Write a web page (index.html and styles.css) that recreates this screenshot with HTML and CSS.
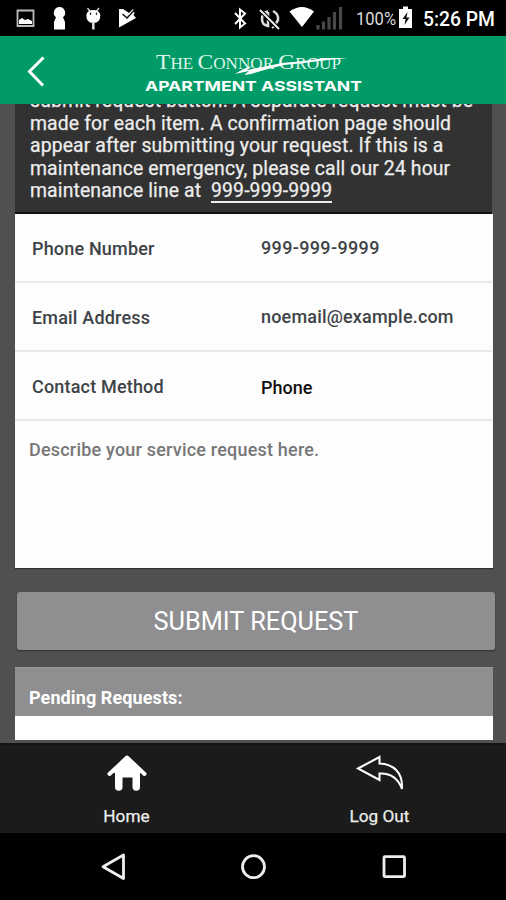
FILE: index.html
```html
<!DOCTYPE html>
<html lang="en">
<head>
<meta charset="utf-8">
<title>Apartment Assistant</title>
<link rel="stylesheet" href="styles.css">
</head>
<body>
<div class="app">
  <div class="status">
    <svg class="status-icons" width="506" height="36" viewBox="0 0 506 36">
      <path d="M17.5 10.5h16v15.500h-16z" fill="none" stroke="#bbb" stroke-width="1.8"/>
      <path d="M19 24v-4l3-2 3 2 3-1 4 2v3z" fill="#fff"/>
      <path d="M59.500 7a5.800 5.800 0 0 1 3.500 10.300l2 4.700v7.500H54V22l2-4.700A5.800 5.800 0 0 1 59.500 7z" fill="#fff"/>
      <path d="M87.500 8l3 4M99 8l-3 4" stroke="#ddd" stroke-width="1.3"/>
      <path d="M86.300 15q1-5 7-5t7 5q0 8-7 8t-7-8z" fill="#fff"/>
      <path d="M93.300 22v7.500" stroke="#ddd" stroke-width="2.500"/>
      <path d="M90.500 12.500v2.500M96.500 12.500v2.500" stroke="#333" stroke-width="1.300"/>
      <path d="M119 9h4l6 4 4-4 1.500 4-1 2 2.500 3L119 27.500z" fill="#fff"/>
      <path d="M122.500 14l4.500 4 7.500-8" fill="none" stroke="#111" stroke-width="1.500"/>
      <path d="M235 13l10 10.500-5 4V9.500l5 4L235 24" fill="none" stroke="#fff" stroke-width="2"/>
      <path d="M268 12v14q-6-1-6-7t6-7M273 11q6 3 5 9l-3 5" fill="none" stroke="#ddd" stroke-width="2.500"/>
      <path d="M268 11l-3 1 2 4M272 28l3-2-2-4" fill="none" stroke="#ddd" stroke-width="1.800"/>
      <path d="M260 10l19 19" stroke="#000" stroke-width="4"/>
      <path d="M260 10l19 19" stroke="#eee" stroke-width="2"/>
      <path d="M289.500 11.500q12.500-9 24.500 0L302 27z" fill="#fff"/>
      <path d="M318 25v4.500M323.500 21.500v8M329 17v12.500M334.500 12v17.500M340.500 7v22.500" stroke="#484848" stroke-width="3.200"/>
      <path d="M399 9h4V6.500h5V9h4v19h-13z" fill="#fff"/>
      <path d="M407.500 12l-5 7h3l-1 6 5-7.500h-3z" fill="#111"/>
      <text class="battery" x="356" y="25" textLength="40" lengthAdjust="spacingAndGlyphs">100%</text>
      <text class="clock" x="423" y="26" textLength="72" lengthAdjust="spacingAndGlyphs">5:26 PM</text>
    </svg>
  </div>
  <header class="header">
    <svg width="506" height="68" viewBox="0 0 506 68">
      <path d="M43.500 21.500L29.500 35.500l13.500 14" fill="none" stroke="#fff" stroke-width="3"/>
      <text class="brand" x="156" y="33" textLength="185" lengthAdjust="spacingAndGlyphs"><tspan class="cap">T</tspan>HE <tspan class="cap">C</tspan>ONNOR <tspan class="cap">G</tspan>ROUP</text>
      <path d="M235 38q9-6 17-8l-5 4 15-3 20-4 22-2 20-3 24 0-20 2-24 3-20 2-16 4-17 5-7 1 5-4z" fill="#fff"/>
      <text class="product" x="145" y="55" textLength="217" lengthAdjust="spacingAndGlyphs">APARTMENT ASSISTANT</text>
    </svg>
  </header>
  <main class="content">
    <section class="intro">
      <p class="l1">submit request button. A separate request must be</p>
      <p>made for each item. A confirmation page should</p>
      <p>appear after submitting your request. If this is a</p>
      <p>maintenance emergency, please call our 24 hour</p>
      <p>maintenance line at &nbsp;<span class="tel">999-999-9999</span></p>
    </section>
    <section class="form">
      <div class="row"><span class="label">Phone Number</span><span class="value raised">999-999-9999</span></div>
      <div class="row"><span class="label">Email Address</span><span class="value raised email">noemail@example.com</span></div>
      <div class="row"><span class="label">Contact Method</span><span class="value dark">Phone</span></div>
      <div class="describe">Describe your service request here.</div>
    </section>
    <button class="submit">SUBMIT REQUEST</button>
    <section class="pending">
      <h2>Pending Requests:</h2>
      <div class="pending-list"></div>
    </section>
  </main>
  <nav class="tabs">
    <div class="tab">
      <svg width="42" height="38" viewBox="0 0 42 38"><path d="M21 4.500L3.500 21M21 4.500L38.500 21" stroke="#fff" stroke-width="4" stroke-linecap="round"/><path d="M21 3L38 20h-4v14a3 3 0 0 1-7.500 0V24.500h-10V34a3.300 3.300 0 0 1-7.500 0V20H4z" fill="#fff"/></svg>
      <span>Home</span>
    </div>
    <div class="tab">
      <svg width="50" height="38" viewBox="0 0 50 38"><path d="M3 15.500L24.500 4v6.500C38 11 48 19 47 36 43 25 36 20 24.500 20.500V27z" fill="none" stroke="#fff" stroke-width="2"/></svg>
      <span>Log Out</span>
    </div>
  </nav>
  <div class="system">
    <svg width="506" height="67" viewBox="0 0 506 67" fill="none" stroke="#eee" stroke-width="2.800" stroke-linejoin="round">
      <path d="M123.500 22v23.500L103 33.700z"/><circle cx="253.500" cy="33.700" r="11"/><rect x="384" y="23.700" width="20.500" height="20" rx="1"/>
    </svg>
  </div>
</div>
</body>
</html>
```
FILE: styles.css
```css
* { box-sizing: border-box; }
body { margin: 0; background: #000; font-family: Roboto, "Liberation Sans", sans-serif; }
.app { width: 506px; height: 900px; display: flex; flex-direction: column; overflow: hidden; }
svg { display: block; }
.status { height: 36px; background: #000; }
.battery { font-size: 18px; fill: #ddd; }
.clock { font-size: 20px; font-weight: 500; fill: #fff; }
.header { height: 68px; background: #019b67; }
.brand { font-family: "Liberation Serif", serif; font-size: 16px; fill: #ddf5ea; }
.cap { font-size: 22px; }
.product { font-family: Inter, sans-serif; font-weight: 700; font-size: 13.5px; fill: #fff; }
.content { height: 639px; background: #505050; overflow: hidden; padding: 0 13px 0 15px; display: flex; flex-direction: column; }
.intro { height: 110px; background: #323232; border-bottom: 2px solid #111; padding: 0 15px 9px; display: flex; flex-direction: column; justify-content: flex-end; margin-right: 1px; flex: none; }
.intro p { margin: 0; font-size: 19.4px; letter-spacing: 0.12px; line-height: 22.400px; color: #ededed; white-space: nowrap; -webkit-text-stroke: 0.25px #ededed; }
.tel { border-bottom: 2px solid #ededed; display: inline-block; line-height: 20px; }
.form { height: 354px; background: #fdfdfd; flex: none; box-shadow: 0 1px 1px #303030; }
.row { height: 69px; border-bottom: 2px solid #e8e8e8; display: grid; grid-template-columns: 229px 1fr; align-items: center; padding: 2px 0 0 17px; margin: 0 1px 0 0; font-size: 18px; letter-spacing: 0.18px; font-weight: 500; color: #3d4347; }
.raised { padding-bottom: 2px; letter-spacing: 0.35px; }
.email { letter-spacing: 0.18px; }
.dark { color: #111; letter-spacing: 0; padding-top: 1px; }
.describe { padding: 18px 14px; font-size: 18px; letter-spacing: 0.2px; line-height: 22px; font-weight: 500; color: #777; }
.submit { width: 478px; height: 58px; margin: 24px 0 0 2px; border: 0; border-radius: 3px; background: #8f8f91; color: #fff; font: 400 25.3px Roboto, sans-serif; flex: none; box-shadow: 0 1px 2px #303030; padding: 0; }
.pending { margin-top: 17px; height: 73px; flex: none; }
.pending h2 { margin: 0; height: 49px; background: #8f8f91; border-top: 1px solid #9b9b9b; color: #fff; font-size: 18px; letter-spacing: 0.1px; line-height: 22px; font-weight: 700; padding: 19px 14px 0; }
.pending-list { height: 24px; background: #fff; }
.tabs { height: 90px; background: #1b1b1b; border-top: 2px solid #151515; display: grid; grid-template-columns: 1fr 1fr; }
.tab { display: flex; flex-direction: column; align-items: center; padding-top: 8px; color: #eee; font-size: 17.2px; line-height: 22px; gap: 14px; -webkit-text-stroke: 0.25px #eee; }
.system { height: 67px; background: #000; }
```
